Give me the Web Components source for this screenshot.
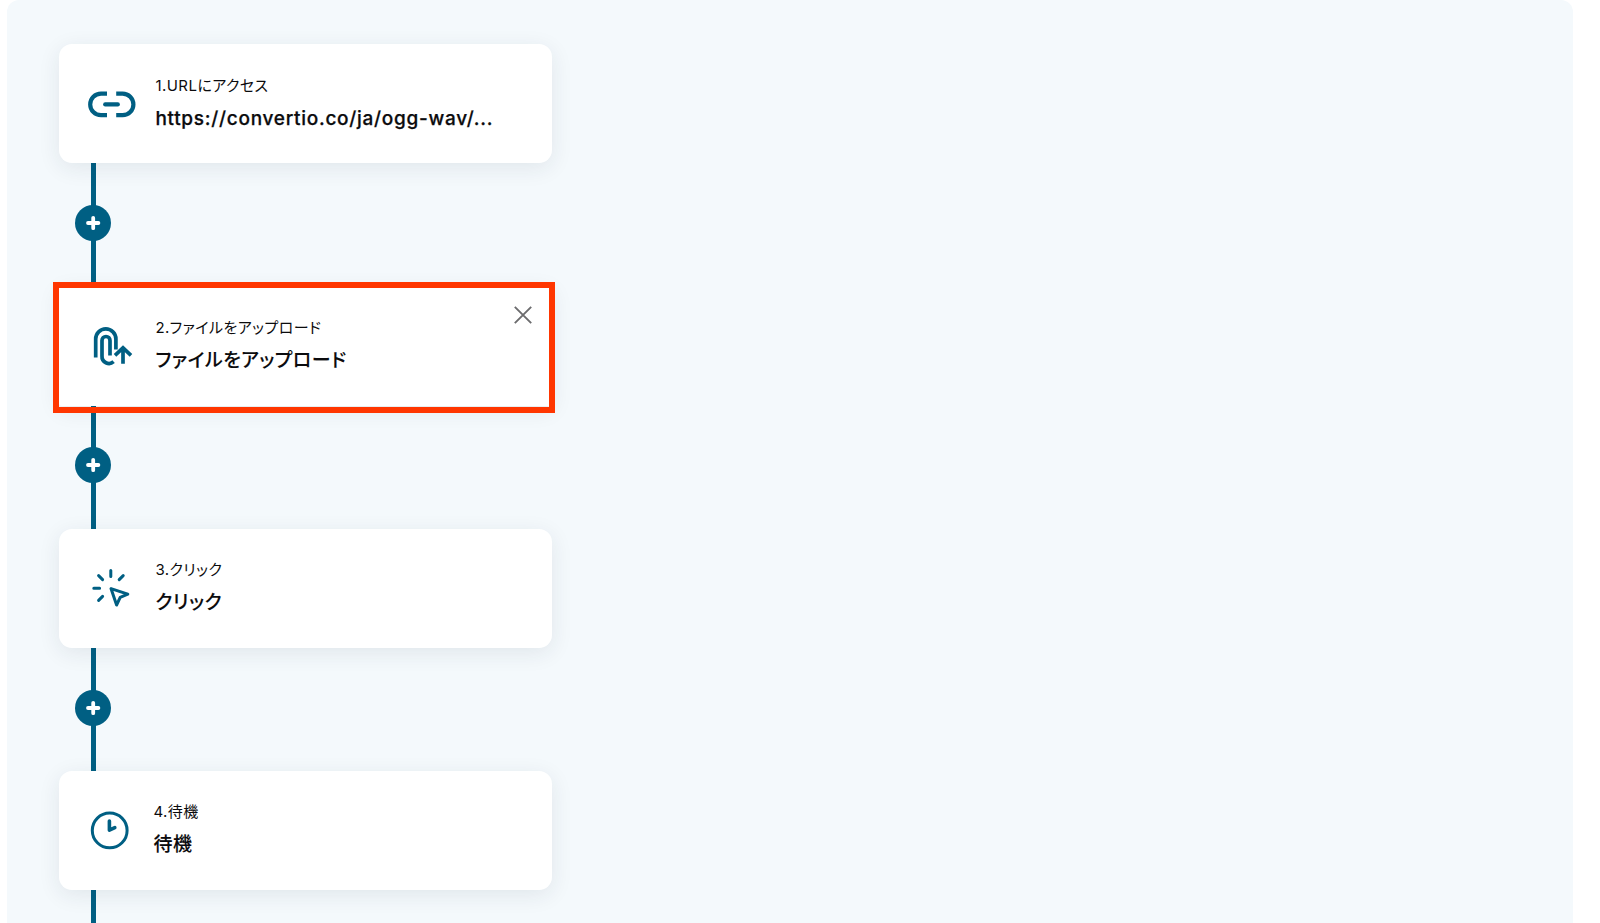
<!DOCTYPE html>
<html lang="ja">
<head>
<meta charset="utf-8">
<title>ワークフロー</title>
<style>
    body {
        margin: 0;
        background: #fff;
        font-family: Inter, "Noto Sans CJK JP", sans-serif;
    }
</style>
</head>
<body>
<flow-board>
    <flow-step label="1.URLにアクセス" title-text="https://convertio.co/ja/ogg-wav/..." style="--title-spacing: 0.72px; --title-stroke: 0.25px">
        <svg width="48" height="48" viewBox="0 0 48 48" fill="none" stroke="#005f83" stroke-width="4.2" stroke-linecap="butt">
            <path d="M19 13.6H13A10.6 10.6 0 0 0 13 35.2H19"/>
            <path d="M28.2 13.6H34.6A10.6 10.6 0 0 1 34.6 35.2H28.2"/>
            <path d="M17.2 24.4H29.8" stroke-linecap="round"/>
        </svg>
    </flow-step>
    <flow-connector></flow-connector>
    <flow-step label="2.ファイルをアップロード" title-text="ファイルをアップロード" selected>
        <svg width="48" height="48" viewBox="0 0 48 48" fill="none" stroke="#005f83" stroke-width="3.7">
            <path d="M7.7 35.5V17A10.1 10.1 0 0 1 27.9 17V27.5"/>
            <path d="M22 33.5V18.5A4 4 0 0 0 14 18.5V34A7 7 0 0 0 25.6 39.7"/>
            <path d="M35 41.8V27M27 33.3L35 25.8L43 33.3"/>
        </svg>
    </flow-step>
    <flow-connector></flow-connector>
    <flow-step label="3.クリック" title-text="クリック">
        <svg width="48" height="48" viewBox="0 0 48 48" fill="none" stroke="#005f83" stroke-width="3" stroke-linecap="round">
            <path d="M22.8 6.6V12.6M10.6 11.6L14.6 15.6M35.2 11.6L31.2 15.6M5.8 24.2H11.6M14.6 32.4L10.6 36.4"/>
            <path d="M23 24.6L39.8 30.2L32.2 33.4L28.6 41Z" stroke-linejoin="round"/>
        </svg>
    </flow-step>
    <flow-connector></flow-connector>
    <flow-step label="4.待機" title-text="待機" style="--icon-width: 46px">
        <svg width="46" height="48" viewBox="0 0 46 48" fill="none" stroke="#005f83" stroke-width="3">
            <circle cx="21.7" cy="24.4" r="17.4"/>
            <path d="M21.4 15V24.2L26.8 21.6" stroke-width="3.6" stroke-linecap="round" stroke-linejoin="round"/>
        </svg>
    </flow-step>
    <flow-connector></flow-connector>
</flow-board>

<script>
    class FlowBoard extends HTMLElement {
        connectedCallback() {
            this.attachShadow({ mode: 'open' });
            this.shadowRoot.innerHTML = `
                <style>
                    :host {
                        display: flex;
                        flex-direction: column;
                        align-items: flex-start;
                        box-sizing: border-box;
                        height: 923px;
                        margin: 0 27px 0 7px;
                        padding: 44px 0 0 52.4px;
                        overflow: hidden;
                        background: #f4f9fc;
                        border-radius: 12px 12px 0 0;
                    }
                </style>
                <slot></slot>
            `;
        }
    }

    class FlowStep extends HTMLElement {
        connectedCallback() {
            const close = this.hasAttribute('selected') ? `
                <svg class="close" width="20" height="20" viewBox="0 0 20 20" fill="none" stroke="#6c6c6e" stroke-width="1.9">
                    <path d="M1.8 1.8L18.2 18.2M18.2 1.8L1.8 18.2"/>
                </svg>
                <div class="outline"></div>` : '';
            this.attachShadow({ mode: 'open' });
            this.shadowRoot.innerHTML = `
                <style>
                    :host {
                        display: flex;
                        flex: none;
                        align-items: center;
                        gap: 19.4px;
                        position: relative;
                        box-sizing: border-box;
                        width: 492.5px;
                        height: 119.2px;
                        padding-left: 28.6px;
                        background: #fff;
                        border-radius: 13px;
                        box-shadow: 0 5px 22px rgba(30, 45, 70, 0.09);
                    }
                    :host([selected]) {
                        border-radius: 3px;
                        box-shadow: 0 1px 0 #fff, 0 5px 22px rgba(30, 45, 70, 0.09);
                    }
                    .icon {
                        display: flex;
                        width: var(--icon-width, 48px);
                    }
                    .text {
                        display: flex;
                        flex-direction: column;
                        gap: 8px;
                        color: #0b0b0d;
                        white-space: nowrap;
                        font-feature-settings: "palt";
                    }
                    .label {
                        font-size: 15px;
                        line-height: 22px;
                        letter-spacing: 0.45px;
                    }
                    .title {
                        font-size: 19px;
                        font-weight: 500;
                        line-height: 28px;
                        letter-spacing: var(--title-spacing, 0.5px);
                        -webkit-text-stroke: var(--title-stroke, 0.1px) currentColor;
                    }
                    .close {
                        position: absolute;
                        top: 19px;
                        right: 19px;
                    }
                    .outline {
                        position: absolute;
                        inset: -4.3px -3.2px -7.3px -6.5px;
                        border: 6.6px solid #ff3600;
                    }
                </style>
                <div class="icon"><slot></slot></div>
                <div class="text">
                    <span class="label">${this.getAttribute('label')}</span>
                    <span class="title">${this.getAttribute('title-text')}</span>
                </div>
                ${close}
            `;
        }
    }

    class FlowConnector extends HTMLElement {
        connectedCallback() {
            this.attachShadow({ mode: 'open' });
            this.shadowRoot.innerHTML = `
                <style>
                    :host {
                        display: flex;
                        flex: none;
                        flex-direction: column;
                        align-items: center;
                        width: 36px;
                        height: 123.1px;
                        margin-left: 15.9px;
                    }
                    .line {
                        width: 5px;
                        flex: 1;
                        background: #005f83;
                    }
                    .line.top {
                        flex: none;
                        height: 43px;
                    }
                    svg {
                        display: block;
                        flex: none;
                        margin: -1px 0;
                    }
                </style>
                <div class="line top"></div>
                <svg width="36" height="36" viewBox="0 0 36 36">
                    <circle cx="18" cy="18" r="18" fill="#005f83"/>
                    <path d="M18.2 12.8V23.2M13 18H23.4" stroke="#fff" stroke-width="3.8" stroke-linecap="round"/>
                </svg>
                <div class="line"></div>
            `;
        }
    }

    customElements.define('flow-board', FlowBoard);
    customElements.define('flow-step', FlowStep);
    customElements.define('flow-connector', FlowConnector);
</script>
</body>
</html>
